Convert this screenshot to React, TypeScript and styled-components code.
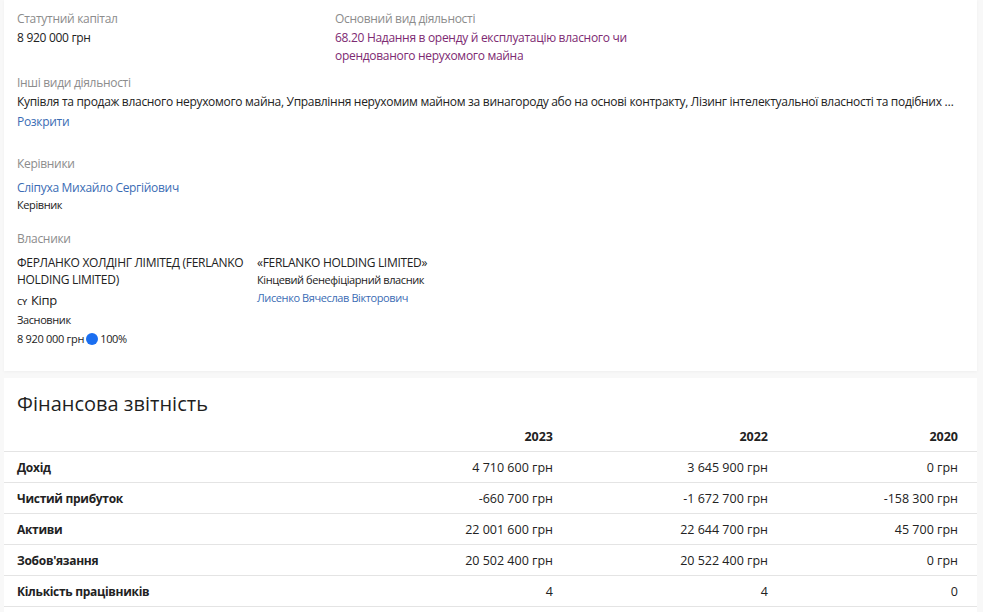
import React from "react"
import styled, {createGlobalStyle} from "styled-components"

const GlobalStyle = createGlobalStyle`
  html, body {
    margin: 0;
    padding: 0;
    background: #f8f8f8;
  }
  body {
    font-family: "Open Sans", "Noto Sans", sans-serif;
    font-size: 12px;
    letter-spacing: -0.3px;
    color: #222;
  }
`

type Owner = {
    name: string
    country: string
    role: string
    capital: string
    share: string
    ultimate: string
    beneficiaryRole: string
    beneficiary: string
}

const owner: Owner = {
    name: "ФЕРЛАНКО ХОЛДІНГ ЛІМІТЕД (FERLANKO HOLDING LIMITED)",
    country: "Кіпр",
    role: "Засновник",
    capital: "8 920 000 грн",
    share: "100%",
    ultimate: "«FERLANKO HOLDING LIMITED»",
    beneficiaryRole: "Кінцевий бенефіціарний власник",
    beneficiary: "Лисенко Вячеслав Вікторович"
}

const years = ["2023", "2022", "2020"]

const finance: { title: string, values: string[] }[] = [
    {title: "Дохід", values: ["4 710 600 грн", "3 645 900 грн", "0 грн"]},
    {title: "Чистий прибуток", values: ["-660 700 грн", "-1 672 700 грн", "-158 300 грн"]},
    {title: "Активи", values: ["22 001 600 грн", "22 644 700 грн", "45 700 грн"]},
    {title: "Зобов'язання", values: ["20 502 400 грн", "20 522 400 грн", "0 грн"]},
    {title: "Кількість працівників", values: ["4", "4", "0"]},
]

export default function App() {
    return (
        <Page>
            <GlobalStyle/>
            <Card>
                <InfoGrid>
                    <div>
                        <Label>Статутний капітал</Label>
                        <Value>8 920 000 грн</Value>
                    </div>
                    <div>
                        <Label>Основний вид діяльності</Label>
                        <Activity>68.20 Надання в оренду й експлуатацію власного чи орендованого нерухомого майна</Activity>
                    </div>
                </InfoGrid>

                <Section $gap={9}>
                    <Label>Інші види діяльності</Label>
                    <Ellipsis>
                        Купівля та продаж власного нерухомого майна, Управління нерухомим майном за винагороду або на
                        основі контракту, Лізинг інтелектуальної власності та подібних продуктів
                    </Ellipsis>
                    <Expand>Розкрити</Expand>
                </Section>

                <Section $gap={24}>
                    <Label>Керівники</Label>
                    <PersonLink>Сліпуха Михайло Сергійович</PersonLink>
                    <Small>Керівник</Small>
                </Section>

                <Section $gap={18}>
                    <Label>Власники</Label>
                    <Owners>
                        <OwnerCol>
                            <OwnerName>{owner.name}</OwnerName>
                            <Country><Flag>cʏ</Flag>{owner.country}</Country>
                            <Small>{owner.role}</Small>
                            <Share>{owner.capital}<Dot/>{owner.share}</Share>
                        </OwnerCol>
                        <OwnerCol>
                            <OwnerName>{owner.ultimate}</OwnerName>
                            <SmallTight>{owner.beneficiaryRole}</SmallTight>
                            <SmallLink>{owner.beneficiary}</SmallLink>
                        </OwnerCol>
                    </Owners>
                </Section>
            </Card>

            <FinanceCard>
                <Heading>Фінансова звітність</Heading>
                <Table>
                    <Row>
                        <span/>
                        {years.map(y => <HeadCell key={y}>{y}</HeadCell>)}
                    </Row>
                    {finance.map(r => (
                        <Row key={r.title}>
                            <RowTitle>{r.title}</RowTitle>
                            {r.values.map((v, i) => <Cell key={i}>{v}</Cell>)}
                        </Row>
                    ))}
                </Table>
            </FinanceCard>
        </Page>
    )
}

const Page = styled.div`
  display: flex;
  flex-direction: column;
  gap: 7px;
  padding: 0 6px 0 4px;
  height: 612px;
  overflow: hidden;
`
const Card = styled.div`
  background: #fff;
  padding: 10px 13px 24px;
  box-shadow: 0 1px 3px rgba(0, 0, 0, 0.04);
`
const InfoGrid = styled.div`
  display: grid;
  grid-template-columns: 318px 300px;
`
const Label = styled.div`
  color: #8c8c8c;
  line-height: 18px;
`
const Value = styled.div`
  line-height: 18px;
  margin-top: 1px;
`
const Activity = styled(Value)`
  color: #7d2a72;
`
const Section = styled.div<{ $gap: number }>`
  margin-top: ${p => p.$gap}px;
`
const Ellipsis = styled.div`
  line-height: 18px;
  margin-top: 1px;
  white-space: nowrap;
  overflow: hidden;
  text-overflow: ellipsis;
  padding-right: 4px;
`
const Expand = styled.div`
  color: #3b6cb4;
  line-height: 18px;
  margin-top: 2px;
  cursor: pointer;
`
const PersonLink = styled.div`
  color: #3b6cb4;
  line-height: 18px;
  margin-top: 6px;
`
const Small = styled.div`
  font-size: 11px;
  letter-spacing: -0.4px;
  line-height: 15px;
`
const SmallTight = styled.div`
  font-size: 11px;
  letter-spacing: -0.4px;
  line-height: 17px;
`
const SmallLink = styled(SmallTight)`
  color: #3b6cb4;
  margin-top: 1px;
`
const Owners = styled.div`
  display: flex;
  gap: 2px;
  margin-top: 6px;
`
const OwnerCol = styled.div`
  width: 238px;
  display: flex;
  flex-direction: column;
`
const OwnerName = styled.div`
  line-height: 17px;
`
const Country = styled.div`
  display: flex;
  align-items: baseline;
  gap: 4px;
  font-size: 13px;
  line-height: 18px;
  margin: 3px 0 2px;
`
const Flag = styled.span`
  font-size: 11px;
`
const Share = styled.div`
  display: flex;
  align-items: center;
  font-size: 11px;
  letter-spacing: -0.3px;
  line-height: 16px;
  margin-top: 4px;
`
const Dot = styled.span`
  width: 12px;
  height: 12px;
  border-radius: 50%;
  background: #1a6ef0;
  margin: 0 2px;
`
const FinanceCard = styled.div`
  background: #fff;
  padding-top: 13px;
  flex: 1;
`
const Heading = styled.h2`
  margin: 0 0 4px;
  padding: 0 13px;
  font-size: 20px;
  font-weight: 500;
  letter-spacing: 0;
  line-height: 26px;
  color: #1f1f1f;
`
const Table = styled.div`
  display: flex;
  flex-direction: column;
`
const Row = styled.div`
  display: grid;
  grid-template-columns: 1fr 215px 215px 190px;
  align-items: center;
  height: 30px;
  padding: 0 19px 0 13px;
  border-bottom: 1px solid #e4e4e4;
`
const HeadCell = styled.div`
  text-align: right;
  font-weight: 700;
  font-size: 12.5px;
  letter-spacing: 0;
`
const RowTitle = styled.div`
  font-weight: 700;
`
const Cell = styled.div`
  text-align: right;
  font-size: 12.5px;
  letter-spacing: 0;
`
